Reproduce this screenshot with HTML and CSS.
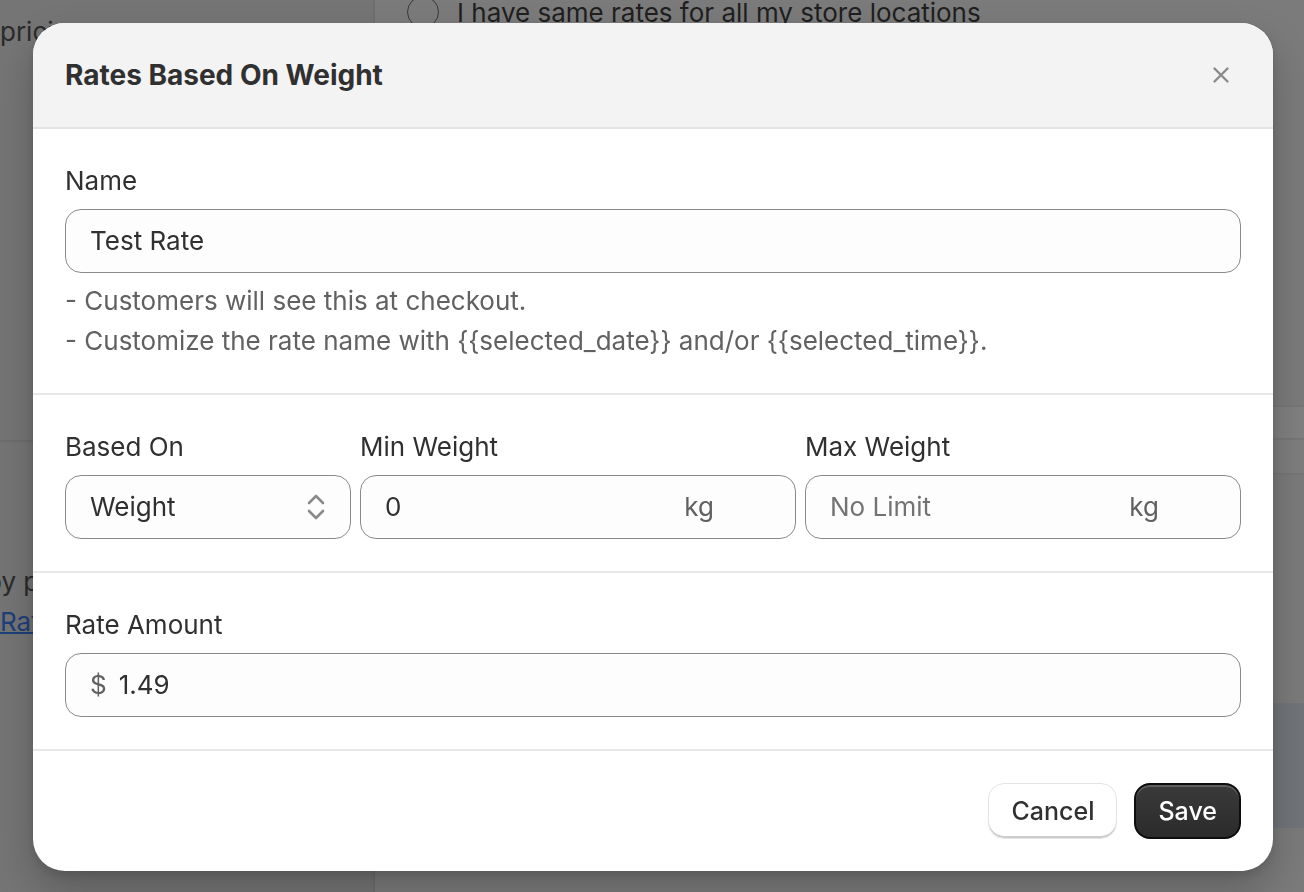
FILE: index.html
```html
<!DOCTYPE html>
<html lang="en">
<head>
<meta charset="utf-8">
<title>Rates Based On Weight</title>
<link rel="stylesheet" href="styles.css">
</head>
<body>
<div class="page">
  <aside class="side">
    <p class="side-top">pricing</p>
    <div class="side-rule"></div>
    <p class="side-text">by provider</p>
    <a class="side-link" href="#">Rates</a>
  </aside>
  <main class="main">
    <div class="radio-row">
      <span class="radio"></span>
      <span class="radio-label">I have same rates for all my store locations</span>
    </div>
    <div class="main-band"></div>
    <div class="main-band2"></div>
    <div class="main-block"></div>
  </main>
</div>

<div class="overlay">
  <div class="modal" role="dialog" aria-labelledby="modal-title">
    <header class="modal-header">
      <h2 id="modal-title" class="modal-title">Rates Based On Weight</h2>
      <button class="close" aria-label="Close">
        <svg width="20" height="20" viewBox="0 0 20 20" aria-hidden="true"><path d="M3.5 3.5 L16.5 16.5 M16.5 3.5 L3.5 16.5" stroke="#8a8a8a" stroke-width="2.4" stroke-linecap="round" fill="none"/></svg>
      </button>
    </header>

    <section class="section">
      <label class="label">Name</label>
      <div class="field">
        <span class="value">Test Rate</span>
      </div>
      <div class="help">
        <p>- Customers will see this at checkout.</p>
        <p>- Customize the rate name with {{selected_date}} and/or {{selected_time}}.</p>
      </div>
    </section>

    <section class="section">
      <div class="row">
        <div class="col col-select">
          <label class="label">Based On</label>
          <div class="field select">
            <span class="value">Weight</span>
            <svg class="chev" width="20" height="28" viewBox="0 0 20 28" aria-hidden="true"><path d="M3 10 L10 3 L17 10 M3 18 L10 25 L17 18" stroke="#8a8a8a" stroke-width="2.6" stroke-linecap="round" stroke-linejoin="round" fill="none"/></svg>
          </div>
        </div>
        <div class="col">
          <label class="label">Min Weight</label>
          <div class="field">
            <span class="value grow">0</span>
            <span class="suffix">kg</span>
          </div>
        </div>
        <div class="col">
          <label class="label">Max Weight</label>
          <div class="field">
            <span class="value grow placeholder">No Limit</span>
            <span class="suffix">kg</span>
          </div>
        </div>
      </div>
    </section>

    <section class="section">
      <label class="label">Rate Amount</label>
      <div class="field">
        <span class="prefix">$</span>
        <span class="value">1.49</span>
      </div>
    </section>

    <footer class="modal-footer">
      <button class="btn btn-secondary">Cancel</button>
      <button class="btn btn-primary">Save</button>
    </footer>
  </div>
</div>
</body>
</html>
```

FILE: styles.css
```css
* { box-sizing: border-box; }

html, body {
  margin: 0;
  padding: 0;
  height: 100%;
}

body {
  font-family: Inter, "Noto Sans", "Liberation Sans", sans-serif;
  background: #7b7b7b;
  overflow: hidden;
}

/* ---------- background page ---------- */
.page {
  display: flex;
  height: 892px;
}

.side {
  width: 375px;
  flex: none;
  background: #757575;
  border-right: 2px solid #6f6f6f;
  display: flex;
  flex-direction: column;
  overflow: hidden;
}

.side-top {
  margin: 12px 0 0 0;
  font-size: 26px;
  line-height: 40px;
  color: #2a2a2a;
}

.side-rule {
  margin-top: 388px;
  height: 2px;
  background: #6d6d6d;
}

.side-text {
  margin: 120px 0 0 -14px;
  font-size: 26px;
  line-height: 40px;
  color: #2a2a2a;
  white-space: nowrap;
}

.side-link {
  margin: 0;
  font-size: 26px;
  line-height: 40px;
  color: #1e3f7a;
  text-decoration: underline;
  text-decoration-thickness: 2px;
}

.main {
  flex: 1;
  display: flex;
  flex-direction: column;
  padding-left: 32px;
}

.radio-row {
  display: flex;
  align-items: center;
  gap: 18px;
  margin-top: -8px;
  height: 40px;
}

.radio {
  width: 32px;
  height: 32px;
  border-radius: 50%;
  border: 1.5px solid #3a3a3a;
  flex: none;
}

.radio-label {
  font-size: 26px;
  color: #1f1f1f;
  white-space: nowrap;
}

.main-band {
  margin-top: 373px;
  height: 35px;
  background: #808080;
  border-top: 2px solid #777;
  border-bottom: 2px solid #777;
}

.main-band2 {
  height: 35px;
  background: #7e7e7e;
  border-bottom: 2px solid #777;
}

.main-block {
  margin-top: 228px;
  height: 125px;
  background: #71757a;
}

/* ---------- overlay + modal ---------- */
.overlay {
  position: fixed;
  inset: 0;
  display: flex;
  align-items: center;
  justify-content: center;
  padding: 1px 0 0 2px;
}

.modal {
  width: 1240px;
  background: #ffffff;
  border-radius: 32px;
  overflow: hidden;
  display: flex;
  flex-direction: column;
  box-shadow: 0 20px 40px rgba(0, 0, 0, 0.22), 0 4px 10px rgba(0, 0, 0, 0.12);
}

.modal-header {
  display: flex;
  align-items: center;
  justify-content: space-between;
  padding: 32px;
  background: #f3f3f3;
  border-bottom: 2px solid #e3e3e3;
}

.modal-title {
  margin: 0;
  font-size: 28px;
  line-height: 40px;
  font-weight: 700;
  color: #303030;
}

.close {
  border: 0;
  background: transparent;
  padding: 0;
  width: 40px;
  height: 40px;
  display: flex;
  align-items: center;
  justify-content: center;
  cursor: pointer;
}

.section {
  padding: 32px;
  border-bottom: 2px solid #e8e8e8;
  display: flex;
  flex-direction: column;
}

.label {
  display: block;
  font-size: 26px;
  line-height: 40px;
  color: #303030;
  margin-bottom: 8px;
}

.field {
  height: 64px;
  border: 1.5px solid #8a8a8a;
  border-radius: 16px;
  background: #fdfdfd;
  display: flex;
  align-items: center;
  padding: 0 24px;
  font-size: 26px;
  color: #303030;
}

.value { white-space: nowrap; }
.grow { flex: 1; }
.placeholder { color: #737373; }

.suffix {
  color: #616161;
  margin-right: 57px;
}

.prefix {
  color: #616161;
  margin-right: 12px;
}

.select {
  justify-content: space-between;
  padding-right: 24px;
}

.chev { display: block; }

.help {
  margin-top: 8px;
  font-size: 26px;
  line-height: 40px;
  color: #616161;
}

.help p { margin: 0; }

.row {
  display: grid;
  grid-template-columns: 286px 1fr 1fr;
  gap: 9px;
}

.col { display: flex; flex-direction: column; }

.modal-footer {
  display: flex;
  justify-content: flex-end;
  gap: 17px;
  padding: 32px;
}

.btn {
  height: 56px;
  border-radius: 16px;
  font-family: inherit;
  font-size: 25px;
  font-weight: 500;
  padding: 0 22px;
  cursor: pointer;
}

.btn-secondary {
  background: #ffffff;
  color: #303030;
  border: 1.5px solid #e3e3e3;
  box-shadow: inset 0 -2px 0 #cccccc;
}

.btn-primary {
  background: linear-gradient(#3a3a3a, #2b2b2b);
  color: #ffffff;
  border: 2px solid #0d0d0d;
  box-shadow: inset 0 2px 0 rgba(255, 255, 255, 0.18);
}
```
